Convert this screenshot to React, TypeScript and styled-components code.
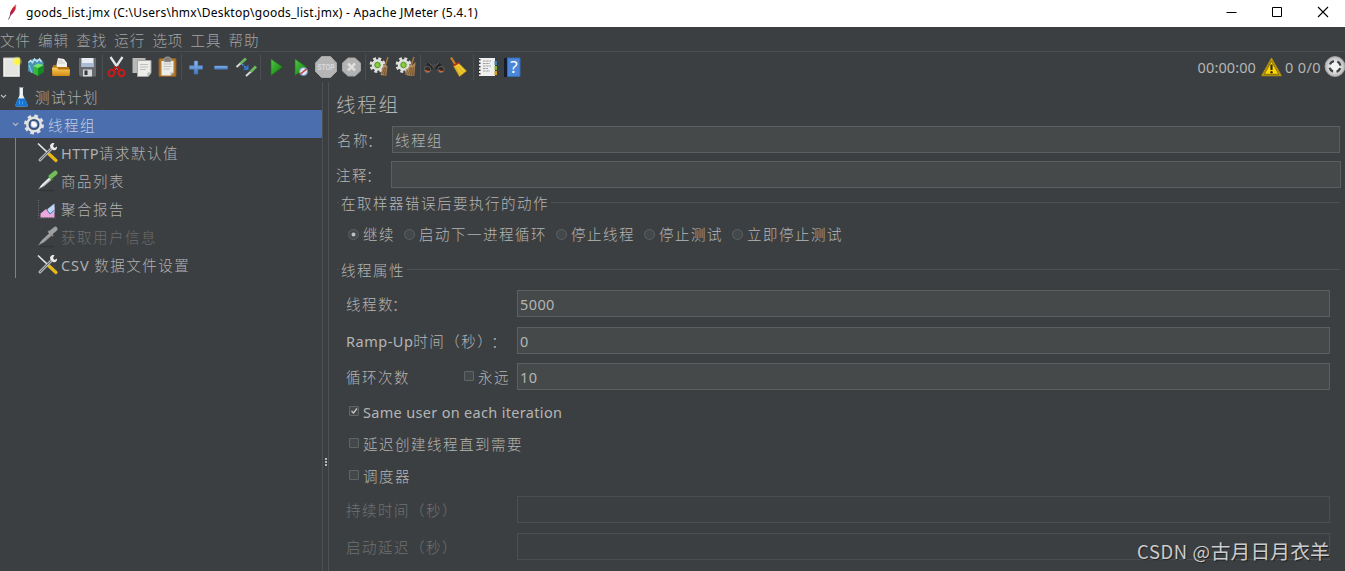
import React from "react";
import styled, { createGlobalStyle } from "styled-components";

const GlobalStyle = createGlobalStyle`
  html, body { margin: 0; padding: 0; overflow: hidden; background: #3c3f41; }
  * { box-sizing: border-box; }
  svg { display: block; flex: none; overflow: visible; }
`;

const Window = styled.div`
  width: 1345px;
  height: 571px;
  display: flex;
  flex-direction: column;
  background: #3c3f41;
  color: #b4b5b5;
  font-family: "Noto Sans", "Noto Sans CJK SC", sans-serif;
  font-size: 15px;
  line-height: 20px;
  white-space: nowrap;
  overflow: hidden;
`;

const TitleBar = styled.header`
  height: 27px;
  flex: none;
  display: flex;
  align-items: center;
  padding: 0 16px 3px 5px;
  background: #fff;
  color: #000;
`;

const WindowTitle = styled.span`
  margin-left: 6px;
  padding-top: 1px;
  font-family: "Noto Sans", sans-serif;
  font-size: 12px;
  letter-spacing: 0.25px;
`;

const WindowControls = styled.div`
  display: flex;
  gap: 34px;
  margin-left: auto;
`;

const Cjk = styled.span<{ $size?: number; $pitch?: number }>`
  font-family: "Noto Sans CJK SC", sans-serif;
  font-weight: 300;
  font-size: ${(p) => p.$size ?? 14.5}px;
  letter-spacing: ${(p) => (p.$pitch ?? 16) - (p.$size ?? 14.5)}px;
  font-kerning: none;
  text-spacing-trim: space-all;
`;

const Colon = styled(Cjk)`
  margin-left: -2px;
`;

const Latin = styled.span<{ $spacing?: number }>`
  font-family: "Noto Sans", sans-serif;
  font-size: 14.5px;
  letter-spacing: ${(p) => p.$spacing ?? 0}px;
  white-space: pre;
`;

const MenuBar = styled.nav`
  height: 25px;
  flex: none;
  display: flex;
  align-items: center;
  gap: 7.1px;
  padding: 1px 0 0;
  border-bottom: 1px solid #4a4c4e;
  color: #a2a4a5;
`;

const ToolBar = styled.div`
  height: 30px;
  flex: none;
  display: flex;
  align-items: center;
`;

const Tool = styled.div<{ $gap: number }>`
  margin-left: ${(p) => p.$gap}px;
`;

const Separator = styled.i<{ $gap: number }>`
  width: 1px;
  height: 26px;
  margin-left: ${(p) => p.$gap}px;
  background: #4b4e50;
`;

const Status = styled.div`
  display: flex;
  align-items: center;
  margin-left: auto;
`;

const Body = styled.div`
  flex: 1;
  display: flex;
  min-height: 0;
`;

const Tree = styled.aside`
  width: 322px;
  flex: none;
`;

const TreeRow = styled.div<{ $selected?: boolean; $disabled?: boolean; $indent: number }>`
  height: 28px;
  display: flex;
  align-items: center;
  padding-left: ${(p) => p.$indent}px;
  padding-top: 1px;
  background: ${(p) => (p.$selected ? "#4b6eaf" : "transparent")};
  color: ${(p) => (p.$disabled ? "#6b6d6e" : p.$selected ? "#c5cfdf" : "#b0b1b2")};
`;

const Branch = styled.div`
  border-left: 1px solid #6f8798;
  margin-left: 15px;
`;

const TreeText = styled.span<{ $gap?: number }>`
  margin-left: ${(p) => p.$gap ?? 3}px;
`;

const Divider = styled.div`
  width: 7px;
  flex: none;
  display: flex;
  flex-direction: column;
  align-items: center;
  justify-content: flex-start;
  gap: 1px;
  padding-top: 376px;
  border-left: 1px solid #4d5052;
  border-right: 1px solid #4d5052;
`;

const Grip = styled.i`
  width: 2px;
  height: 2px;
  background: #b4b6b7;
`;

const Panel = styled.main`
  flex: 1;
  display: flex;
  flex-direction: column;
  min-width: 0;
`;

const Heading = styled.h1`
  height: 44px;
  margin: 0;
  padding: 7px 0 0 7px;
  font-size: 20px;
  font-weight: 300;
  line-height: 30px;
`;

const FormRow = styled.div<{ $left: number; $right: number; $after: number; $disabled?: boolean }>`
  height: 27px;
  flex: none;
  display: flex;
  align-items: center;
  padding-left: ${(p) => p.$left}px;
  padding-right: ${(p) => p.$right}px;
  margin-bottom: ${(p) => p.$after}px;
  color: ${(p) => (p.$disabled ? "#6f7172" : "#b4b5b5")};
`;

const FieldLabel = styled.div<{ $width: number }>`
  width: ${(p) => p.$width}px;
  flex: none;
  display: flex;
  align-items: center;
  justify-content: space-between;
`;

const Field = styled.div<{ $disabled?: boolean }>`
  flex: 1;
  height: 27px;
  display: flex;
  align-items: center;
  padding: 0 0 0 2px;
  border: 1px solid ${(p) => (p.$disabled ? "#4c4e50" : "#5c5f60")};
  background: ${(p) => (p.$disabled ? "#3c3f41" : "#45494a")};
`;

const Legend = styled.div<{ $after: number }>`
  height: 22px;
  flex: none;
  display: flex;
  align-items: center;
  gap: 2px;
  padding: 0 5px 0 8px;
  margin-bottom: ${(p) => p.$after}px;
`;

const Rule = styled.i<{ $short?: boolean }>`
  height: 1px;
  margin-bottom: 2px;
  flex: ${(p) => (p.$short ? "0 0 2px" : "1")};
  background: #4e5153;
`;

const RadioRow = styled.div`
  height: 24px;
  flex: none;
  display: flex;
  align-items: center;
  gap: 9px;
  padding-left: 19px;
  margin-bottom: 13px;
`;

const Option = styled.div<{ $end?: number }>`
  display: flex;
  align-items: center;
  gap: 4px;
  padding-right: ${(p) => p.$end ?? 0}px;
`;

const RadioDot = styled.i<{ $on?: boolean }>`
  width: 11px;
  height: 11px;
  border: 1px solid #5e6162;
  border-radius: 50%;
  background: ${(p) => (p.$on ? "radial-gradient(circle, #c0c0c0 1.5px, #43494a 2.4px)" : "#43494a")};
`;

const Box = styled.i`
  width: 10px;
  height: 10px;
  flex: none;
  margin-bottom: 1px;
  border: 1px solid #626566;
  border-radius: 1px;
  background: #43494a;
`;

const CheckRow = styled.div`
  height: 32px;
  flex: none;
  display: flex;
  align-items: center;
  padding: 0 0 1px 20px;
`;

const CheckGroup = styled.div`
  flex: none;
  margin-bottom: 4px;
`;

const Watermark = styled.div`
  position: absolute;
  left: 1137px;
  top: 537px;
  display: flex;
  line-height: 28px;
  color: #cbcccd;
  text-shadow: 1px 1px 1px #1d1e1f;
  font-family: "Noto Sans CJK SC", sans-serif;
  font-weight: 400;
`;

const MarkPart = styled.span<{ $size: number; $spacing: number }>`
  font-size: ${(p) => p.$size}px;
  letter-spacing: ${(p) => p.$spacing}px;
  white-space: pre;
`;

const Svg = ({ w, h = 22, children }: { w: number; h?: number; children: React.ReactNode }) => (
  <svg width={w} height={h} viewBox={`0 0 ${w} ${h}`} fill="none">
    {children}
  </svg>
);

const GradientSheet = styled.svg`
  position: absolute;
`;

const Gradients = () => (
  <GradientSheet width="0" height="0">
    <defs>
      <linearGradient id="gold" x1="0" y1="0" x2="0" y2="1">
        <stop offset="0" stopColor="#f8cf62" />
        <stop offset="1" stopColor="#d68b12" />
      </linearGradient>
      <linearGradient id="green" x1="0" y1="0" x2="1" y2="1">
        <stop offset="0" stopColor="#57c64c" />
        <stop offset="1" stopColor="#087c05" />
      </linearGradient>
      <linearGradient id="blue" x1="0" y1="0" x2="0" y2="1">
        <stop offset="0" stopColor="#93bdf0" />
        <stop offset="1" stopColor="#3f78c2" />
      </linearGradient>
      <radialGradient id="silver">
        <stop offset="0.3" stopColor="#f8f8f8" />
        <stop offset="1" stopColor="#b4b4b4" />
      </radialGradient>
      <radialGradient id="sun">
        <stop offset="0.2" stopColor="#fff93c" />
        <stop offset="1" stopColor="#fff45a" stopOpacity="0" />
      </radialGradient>
      <linearGradient id="straw" x1="0" y1="0" x2="1" y2="1">
        <stop offset="0" stopColor="#d3b184" />
        <stop offset="1" stopColor="#8a6134" />
      </linearGradient>
      <linearGradient id="glass" x1="0" y1="0" x2="1" y2="0">
        <stop offset="0" stopColor="#8fa6bd" />
        <stop offset="0.45" stopColor="#f6fafd" />
        <stop offset="1" stopColor="#a9bccd" />
      </linearGradient>
    </defs>
  </GradientSheet>
);

const Feather = () => (
  <Svg w={15} h={18}>
    <path d="M3.500 16.500 6 11" stroke="#8b5a72" />
    <path d="M4.800 12.500C5.200 8.500 7.500 3.800 11 1.500c.7 3-1 8-6.200 11Z" fill="#c92035" />
    <path d="M9.300 3.300c.8-1 1.300-1.500 1.700-1.800.2 1.200.1 2.600-.3 3.800Z" fill="#ec8128" />
    <path d="M4.800 12.500c.2-2 .8-4 1.700-5.800l1.300 3.500Z" fill="#93265f" />
  </Svg>
);

const NewIcon = () => (
  <Svg w={20}>
    <path d="M1.500 2h16v18.500h-16z" fill="#eeeeea" stroke="#c8c8c5" />
    <path d="M3 4h13v15H3z" fill="#e4e4e0" />
    <circle cx="15" cy="5.500" r="5.500" fill="url(#sun)" />
    <circle cx="15" cy="5.500" r="2.500" fill="#fff83a" />
  </Svg>
);

const TemplatesIcon = () => (
  <Svg w={18}>
    <path d="m1 6 4-3 9 0 3 4-5 8-7 2-4-2Z" fill="#4b93b5" />
    <path d="m1.500 6.500 2-2 2 2 2-3.500 2.500 2.500 2.500-2.500 2 3" stroke="#c3e4f0" strokeWidth="1.500" />
    <path d="m2 9 3 8" stroke="#8ccbe2" />
    <path d="m6 10 5 2v8l-5-2.500Z" fill="#34b735" />
    <path d="m11 12 6-3v7l-6 4Z" fill="#128a1d" />
    <path d="m6 10 5-2.500 6 1.500-6 3Z" fill="#75e26b" />
  </Svg>
);

const OpenIcon = () => (
  <Svg w={20}>
    <path d="m5 11 2-9 6 1 3 4v6Z" fill="#f2f1ec" />
    <path d="M7 5h5M7 7h7" stroke="#c9c8c3" />
    <path d="M2 9h3l1 2h12l1 8H1Z" fill="#b8740f" />
    <path d="M1 11.500h5l1.500 2H19L18.500 20H1.500Z" fill="url(#gold)" />
  </Svg>
);

const SaveIcon = () => (
  <Svg w={19}>
    <path d="M1 2h17v18.500H2.500L1 19Z" fill="#686b6f" />
    <path d="M3.500 2h12v9h-12z" fill="#e8edf3" />
    <path d="M3.500 7h12v4h-12z" fill="#a9bed6" />
    <path d="M5 13.500h9v7H5z" fill="#d6d8da" />
    <path d="M6.500 14.500h3V19h-3z" fill="#33363a" />
  </Svg>
);

const CutIcon = () => (
  <Svg w={19}>
    <path d="m3.500 1 8 12M15.500 1l-8 12" stroke="#e4e4e4" strokeWidth="2.300" />
    <path d="m10 10.500 3 4M9 10.500l-3 4" stroke="#b0100e" strokeWidth="2.200" />
    <ellipse cx="4.500" cy="17" rx="3" ry="3.200" transform="rotate(25 4.500 17)" stroke="#c81c1a" strokeWidth="1.900" />
    <ellipse cx="14.500" cy="17" rx="3" ry="3.200" transform="rotate(-25 14.500 17)" stroke="#c81c1a" strokeWidth="1.900" />
  </Svg>
);

const CopyIcon = () => (
  <Svg w={20}>
    <path d="M.5 2h13v15H.5z" fill="#b9bab8" />
    <path d="M5.500 4.500H19v12.500l-3 3.500H5.500Z" fill="#ecece9" stroke="#a5a6a4" />
    <path d="M8 8.500h8M8 11h8M8 13.500h6" stroke="#bfc0be" />
    <path d="M19 17h-3v3.500" fill="#d4d4d0" stroke="#aaa" />
  </Svg>
);

const PasteIcon = () => (
  <Svg w={19}>
    <rect x="1" y="2.500" width="17" height="18" rx="1" fill="#b17b32" stroke="#845b24" />
    <path d="M3.500 5h12v11.500l-3 3h-9Z" fill="#ededea" />
    <path d="M5.500 8h8M5.500 10.500h8M5.500 13h6" stroke="#bfc0bf" />
    <path d="M15.500 16.500h-3v3Z" fill="#b6b6b4" />
    <path d="M6 2.500 8 1h3l2 1.500V6H6Z" fill="#7d7d78" stroke="#bbb" strokeWidth=".6" />
  </Svg>
);

const PlusIcon = () => (
  <Svg w={14}>
    <path d="M5.200 5h3.600v4.800h4.700v3.400H8.800V18H5.200v-4.800H.5V9.800h4.700Z" fill="url(#blue)" stroke="#4d80bd" strokeWidth=".6" />
  </Svg>
);

const MinusIcon = () => (
  <Svg w={14}>
    <path d="M.500 10h13v3.200H.5z" fill="url(#blue)" stroke="#4d80bd" strokeWidth=".6" />
  </Svg>
);

const ToggleIcon = () => (
  <Svg w={21}>
    <path d="m.500 11 4.500-4" stroke="#d5d9d6" strokeWidth="2" />
    <path d="m4.500 7.500 5.500-5" stroke="#6cb85a" strokeWidth="2.800" />
    <path d="m10 20 5-4.500" stroke="#d5d9d6" strokeWidth="2" />
    <path d="m14.500 16 5.500-5.500" stroke="#6cb85a" strokeWidth="2.800" />
    <path d="m6 8 4 4" stroke="#4c89da" strokeWidth="1.600" strokeDasharray="2 1" />
    <path d="M12.500 8.500v5.500H7Z" fill="#3276d4" />
  </Svg>
);

const PlayIcon = ({ noPause = false }: { noPause?: boolean }) => (
  <Svg w={noPause ? 15 : 13}>
    <path d="M1 3v16.500L12.500 11Z" fill="url(#green)" stroke="#13760f" strokeWidth=".6" />
    {noPause && (
      <>
        <circle cx="9.500" cy="15.500" r="4" fill="#dbe6f4" stroke="#6f93c2" />
        <path d="m6.500 18 6-5" stroke="#cc3836" strokeWidth="1.600" />
      </>
    )}
  </Svg>
);

const StopIcon = () => (
  <Svg w={22}>
    <path d="M6.500.5h9L21.500 7v8.500l-6 6h-9l-6-6V7Z" fill="#b5b5b5" stroke="#a6a6a6" />
    <text x="11" y="14.400" textAnchor="middle" textLength="17" lengthAdjust="spacingAndGlyphs" fontFamily="Liberation Sans" fontWeight="bold" fontSize="9" fill="#dadada">STOP</text>
  </Svg>
);

const ShutdownIcon = () => (
  <Svg w={19}>
    <path d="M6 2h7l5.500 5v8L13 20H6L.5 15V7Z" fill="#b3b3b3" stroke="#a5a5a5" />
    <path d="m6 7.500 7 7m0-7-7 7" stroke="#dedede" strokeWidth="2.500" />
  </Svg>
);

const GearBroomIcon = ({ double = false }: { double?: boolean }) => (
  <Svg w={20}>
    <circle cx="7.500" cy="9" r="6.300" stroke="#dcdcd8" strokeWidth="3.200" strokeDasharray="2.800 2.150" />
    <circle cx="7.500" cy="9" r="5" fill="#d8d8d3" stroke="#e6e6e3" strokeWidth="1.500" />
    <circle cx="7.500" cy="9" r="2.700" fill="#8bcb3e" stroke="#4c9a1b" />
    <path d="m18 1-3 9" stroke="#a4763d" strokeWidth="1.500" />
    <path d="m13.500 8 4 2-1 10-6-1Z" fill="url(#straw)" />
    {double && <path d="m9.500 13 4-1 6-6-1 14-9-1Z" fill="url(#straw)" />}
    <path d="m14.500 11-2 7m3-6-1 7" stroke="#6a4a2c" strokeWidth=".8" />
    {double && <path d="m11.500 14-1 5m7-8-1 8" stroke="#6a4a2c" strokeWidth=".8" />}
  </Svg>
);

const SearchIcon = () => (
  <Svg w={22}>
    <path d="m1 12 3-5 3-1 2 7-7 1Zm18 0-3-5-3-1-2 7 7 1Z" fill="#252525" />
    <path d="M8 8.500h4v3H8z" fill="#4a4a4a" />
    <circle cx="3.500" cy="13.500" r="3.200" fill="#302a28" stroke="#777" strokeWidth=".7" />
    <circle cx="17" cy="13.500" r="3.200" fill="#302a28" stroke="#777" strokeWidth=".7" />
    <path d="M1.500 14a2.500 2.500 0 0 0 4 1M15 14a2.500 2.500 0 0 0 4 1" stroke="#d26b36" strokeWidth="1.500" />
    <path d="m5.500 6.500 2 3m7-3-2 3" stroke="#8b8b8b" strokeWidth=".8" />
  </Svg>
);

const BroomIcon = () => (
  <Svg w={18}>
    <path d="m1 1.500 5 8" stroke="#c88325" strokeWidth="2.200" />
    <path d="m3.500 10 5-3 8 8-7 5.500Z" fill="#efcb32" stroke="#b98d10" strokeWidth=".7" />
    <path d="m3 10 6-3.500" stroke="#b42f1c" strokeWidth="1.700" />
    <path d="m5.500 11 5 8m-3-9 6 7" stroke="#c79c1b" strokeWidth=".8" />
  </Svg>
);

const FunctionIcon = () => (
  <Svg w={20}>
    <path d="M1 2h16v18H1z" fill="#efefef" />
    <path d="M5 5h8M5 7.500h7M5 10h8M5 12.500h5M5 15h7" stroke="#9b9ea1" strokeDasharray="2.500 .7" />
    <path d="M1.500 3v17" stroke="#333" strokeWidth="2" strokeDasharray="1.500 2" />
    <path d="M16.500 5H19v4h-2.500z" fill="#3f80b0" />
    <path d="M16.500 10H19v4h-2.500z" fill="#7cae32" />
    <path d="M16.500 15H19v4h-2.500z" fill="#cf9b22" />
  </Svg>
);

const HelpIcon = () => (
  <Svg w={18}>
    <path d="M0 2h3.500v19H0z" fill="#141d2b" />
    <path d="M3.500 2h12.500v18.500H3.500z" fill="#4c86d8" stroke="#356cb8" />
    <text x="10" y="17" textAnchor="middle" fontFamily="Noto Sans" fontSize="17" fill="#fff">?</text>
  </Svg>
);

const WarningIcon = () => (
  <Svg w={22}>
    <path d="M10.500 2.500 20 19.500H1Z" fill="#f4c800" stroke="#ad8c10" strokeWidth="1.500" strokeLinejoin="round" />
    <path d="M10.500 5 17.800 18.300H3.200Z" fill="#fcd704" stroke="#66510a" strokeWidth=".8" />
    <path d="M10.500 8.500V14" stroke="#332800" strokeWidth="2.200" />
    <circle cx="10.500" cy="16.300" r="1.200" fill="#332800" />
  </Svg>
);

const TargetIcon = () => (
  <Svg w={20}>
    <circle cx="10" cy="10.500" r="10" fill="url(#silver)" stroke="#a6a7a6" strokeWidth=".8" />
    <circle cx="10" cy="10.500" r="5.500" stroke="#3c4143" strokeWidth="2.300" strokeDasharray="5 3.640" strokeDashoffset="-1.800" />
    <circle cx="10" cy="10.500" r="3.300" fill="#f4f4f3" />
  </Svg>
);

const Chevron = () => (
  <Svg w={7} h={5}><path d="m1 1 2.500 2.500L6 1" stroke="#b6b8ba" strokeWidth="1.200" /></Svg>
);

const FlaskIcon = () => (
  <Svg w={14}>
    <path d="M4.500 1.500h3.500V9l4.500 9.500c.5 1.300 0 2-1 2h-10c-1 0-1.500-.7-1-2L4.500 9Z" fill="url(#glass)" />
    <path d="M3 12.500h6.800l2.700 6c.5 1.300 0 2-1 2h-10c-1 0-1.500-.7-1-2Z" fill="#1674d1" />
    <path d="M4.500 14.500v4m3-3v3" stroke="#4fa4f2" />
    <path d="M4 1.500h4.500" stroke="#8d9aa6" />
  </Svg>
);

const GearIcon = () => (
  <Svg w={21}>
    <circle cx="10" cy="10.500" r="8.400" stroke="#e0e1e2" strokeWidth="3.200" strokeDasharray="3.500 3.100" />
    <circle cx="10" cy="10.500" r="6.500" fill="#e0e4ea" stroke="#e2e2e1" strokeWidth="3" />
    <circle cx="10" cy="10.500" r="4.500" fill="#a9bcdb" stroke="#34547f" strokeWidth="2" />
    <path d="M7.500 7.500c3.500-.5 5 1.500 5.500 4-2 2-4.500 1.500-5.500 0Z" fill="#fff" />
  </Svg>
);

const ToolsIcon = () => (
  <Svg w={20}>
    <path d="m0 1.500 9 8.500" stroke="#e6e7e8" strokeWidth="1.700" />
    <path d="m10.500 11.500 7.500 7" stroke="#e8b817" strokeWidth="3.200" strokeLinecap="round" />
    <path d="M2 18 13.500 6.500" stroke="#aeb1b4" strokeWidth="3" strokeLinecap="round" />
    <path d="M2 18 13.500 6.500" stroke="#55595c" strokeWidth=".8" />
    <path d="M16.500 1c-4-.5-5 2.500-4 4.500l2.500 2.500c2 1 4.500-.5 4-3.500L16.500 6 15 4Z" fill="#e9ebec" />
  </Svg>
);

const PipetteIcon = ({ disabled = false }: { disabled?: boolean }) => (
  <Svg w={20}>
    <path d="M2 20.500h14" stroke="#313436" strokeWidth="1.300" />
    <path d="M0 19.500 4.500 13.500 11.500 7l2.500 2.500L6.500 16Z" fill={disabled ? "#969696" : "#b5bdbd"} />
    <path d="M2.500 17 12 8.200" stroke={disabled ? "#a8a8a8" : "#f0f4ee"} strokeWidth="1.300" />
    <path d="M10.300 5 15 10" stroke={disabled ? "#8d8d8d" : "#31742e"} strokeWidth="2" />
    <path d="m13 6.500 4.300-3.500" stroke={disabled ? "#a0a0a0" : "#75bc5b"} strokeWidth="4.500" strokeLinecap="round" />
  </Svg>
);

const GraphIcon = () => (
  <Svg w={20}>
    <path d="M.5 2v18H18" stroke="#6c6f71" strokeDasharray="1 1.500" />
    <path d="m2.500 15.500 5.500-4.500 3 3 5.500-5v10.500h-14Z" fill="#eba8df" />
    <path d="m9.500 11 7-5.500v8l-4 3-3-3Z" fill="#bdd9f7" />
    <path d="m9 12 3 4 4.500-4" stroke="#446da7" />
  </Svg>
);

const MinimizeIcon = () => <Svg w={12} h={12}><path d="M1.500 6.500h10" stroke="#000" /></Svg>;
const MaximizeIcon = () => <Svg w={12} h={12}><path d="M1.500 1.500h9v9h-9z" stroke="#000" /></Svg>;
const CloseIcon = () => <Svg w={12} h={12}><path d="m1 1 10 10M11 1 1 11" stroke="#000" strokeWidth="1.100" /></Svg>;

const menus = ["文件", "编辑", "查找", "运行", "选项", "工具", "帮助"];

const tools: [number, React.ReactNode][] = [
  [2, <NewIcon />], [5, <TemplatesIcon />], [6, <OpenIcon />], [7, <SaveIcon />],
  [5, null], [4, <CutIcon />], [6, <CopyIcon />], [6, <PasteIcon />],
  [4, null], [7, <PlusIcon />], [11, <MinusIcon />], [8, <ToggleIcon />],
  [3, null], [9, <PlayIcon />], [11, <PlayIcon noPause />], [6, <StopIcon />], [5, <ShutdownIcon />],
  [4, null], [4, <GearBroomIcon />], [6, <GearBroomIcon double />],
  [4, null], [3, <SearchIcon />], [4, <BroomIcon />],
  [5, null], [4, <FunctionIcon />], [6, <HelpIcon />],
];

export default function App() {
  return (
    <Window>
      <GlobalStyle />
      <Gradients />
      <TitleBar>
        <Feather />
        <WindowTitle>goods_list.jmx (C:\Users\hmx\Desktop\goods_list.jmx) - Apache JMeter (5.4.1)</WindowTitle>
        <WindowControls><MinimizeIcon /><MaximizeIcon /><CloseIcon /></WindowControls>
      </TitleBar>
      <MenuBar>
        {menus.map((m) => <Cjk key={m} $pitch={15.500}>{m}</Cjk>)}
      </MenuBar>
      <ToolBar>
        {tools.map(([gap, icon], i) => icon ? <Tool key={i} $gap={gap}>{icon}</Tool> : <Separator key={i} $gap={gap} />)}
        <Status>
          <Latin $spacing={0.1}>00:00:00</Latin>
          <Tool $gap={5}><WarningIcon /></Tool>
          <Tool $gap={2}><Latin $spacing={0.4}>0 0/0</Latin></Tool>
          <Tool $gap={4}><TargetIcon /></Tool>
        </Status>
      </ToolBar>
      <Body>
        <Tree>
          <TreeRow $indent={-1}><Chevron /><Tool $gap={8}><FlaskIcon /></Tool><TreeText $gap={6}><Cjk>测试计划</Cjk></TreeText></TreeRow>
          <TreeRow $indent={12} $selected><Chevron /><Tool $gap={5}><GearIcon /></Tool><TreeText><Cjk>线程组</Cjk></TreeText></TreeRow>
          <Branch>
            <TreeRow $indent={22}><ToolsIcon /><TreeText><Latin $spacing={0.5}>HTTP</Latin><Cjk>请求默认值</Cjk></TreeText></TreeRow>
            <TreeRow $indent={22}><PipetteIcon /><TreeText><Cjk>商品列表</Cjk></TreeText></TreeRow>
            <TreeRow $indent={22}><GraphIcon /><TreeText><Cjk>聚合报告</Cjk></TreeText></TreeRow>
            <TreeRow $indent={22} $disabled><PipetteIcon disabled /><TreeText><Cjk>获取用户信息</Cjk></TreeText></TreeRow>
            <TreeRow $indent={22}><ToolsIcon /><TreeText><Latin $spacing={0.9}>CSV </Latin><Cjk>数据文件设置</Cjk></TreeText></TreeRow>
          </Branch>
        </Tree>
        <Divider><Grip /><Grip /><Grip /></Divider>
        <Panel>
          <Heading><Cjk $size={19.500} $pitch={21.300}>线程组</Cjk></Heading>
          <FormRow $left={8} $right={5} $after={8}>
            <FieldLabel $width={55}><span><Cjk>名称</Cjk><Colon>：</Colon></span></FieldLabel><Field><Cjk>线程组</Cjk></Field>
          </FormRow>
          <FormRow $left={7} $right={4} $after={4}>
            <FieldLabel $width={55}><span><Cjk>注释</Cjk><Colon>：</Colon></span></FieldLabel><Field />
          </FormRow>
          <Legend $after={8}><Rule $short /><Cjk>在取样器错误后要执行的动作</Cjk><Rule /></Legend>
          <RadioRow>
            <Option><RadioDot $on /><Cjk>继续</Cjk></Option>
            <Option><RadioDot /><Cjk>启动下一进程循环</Cjk></Option>
            <Option><RadioDot /><Cjk>停止线程</Cjk></Option>
            <Option><RadioDot /><Cjk>停止测试</Cjk></Option>
            <Option><RadioDot /><Cjk>立即停止测试</Cjk></Option>
          </RadioRow>
          <Legend $after={9}><Rule $short /><Cjk>线程属性</Cjk><Rule /></Legend>
          <FormRow $left={17} $right={15} $after={10}>
            <FieldLabel $width={171}><span><Cjk>线程数</Cjk><Colon>：</Colon></span></FieldLabel><Field><Latin $spacing={0.4}>5000</Latin></Field>
          </FormRow>
          <FormRow $left={17} $right={15} $after={9}>
            <FieldLabel $width={171}><span><Latin $spacing={0.5}>Ramp-Up</Latin><Cjk>时间（秒）</Cjk><Colon>：</Colon></span></FieldLabel><Field><Latin>0</Latin></Field>
          </FormRow>
          <FormRow $left={17} $right={15} $after={6}>
            <FieldLabel $width={171}><Cjk>循环次数</Cjk><Option $end={7}><Box /><Cjk>永远</Cjk></Option></FieldLabel><Field><Latin $spacing={0.4}>10</Latin></Field>
          </FormRow>
          <CheckGroup>
            <CheckRow><Option><Box as="span"><Svg w={8} h={8}><path d="m1.500 4 2 2L7 1.500" stroke="#c4c5c5" strokeWidth="1.300" /></Svg></Box><Latin $spacing={0.32}>Same user on each iteration</Latin></Option></CheckRow>
            <CheckRow><Option><Box /><Cjk>延迟创建线程直到需要</Cjk></Option></CheckRow>
            <CheckRow><Option><Box /><Cjk>调度器</Cjk></Option></CheckRow>
          </CheckGroup>
          <FormRow $left={17} $right={15} $after={10} $disabled>
            <FieldLabel $width={171}><Cjk>持续时间（秒）</Cjk></FieldLabel><Field $disabled />
          </FormRow>
          <FormRow $left={17} $right={15} $after={0} $disabled>
            <FieldLabel $width={171}><Cjk>启动延迟（秒）</Cjk></FieldLabel><Field $disabled />
          </FormRow>
        </Panel>
      </Body>
      <Watermark><MarkPart $size={18.500} $spacing={0.6}>CSDN @</MarkPart><MarkPart $size={19.800} $spacing={0.1}>古月日月衣羊</MarkPart></Watermark>
    </Window>
  );
}
